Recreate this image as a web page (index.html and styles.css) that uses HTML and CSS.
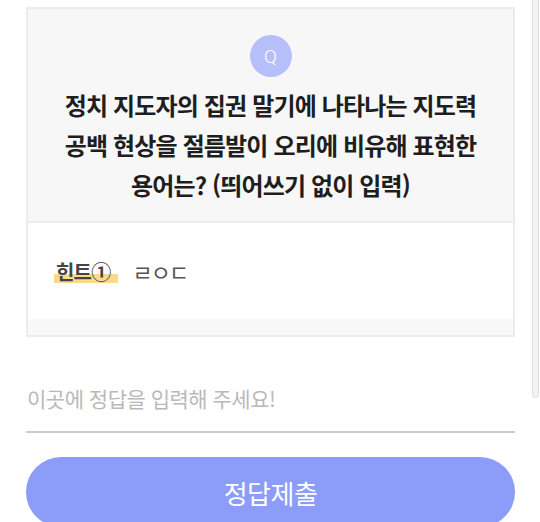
FILE: index.html
```html
<!DOCTYPE html>
<html lang="ko">
<head>
    <meta charset="UTF-8">
    <meta name="viewport" content="width=device-width, initial-scale=1.0">
    <title>퀴즈</title>
    <link rel="stylesheet" href="styles.css">
</head>
<body>
    <div class="pagina">
        <div class="tarjeta">
            <div class="pregunta">
                <div class="icono-q">Q</div>
                <h2 class="titulo">정치 지도자의 집권 말기에 나타나는 지도력<br>공백 현상을 절름발이 오리에 비유해 표현한<br>용어는? (띄어쓰기 없이 입력)</h2>
            </div>
            <div class="pista">
                <span class="pista-label">힌트①</span>
                <span class="pista-texto">ㄹㅇㄷ</span>
            </div>
            <div class="tarjeta-pie"></div>
        </div>

        <input type="text" class="respuesta" placeholder="이곳에 정답을 입력해 주세요!">
        <button class="enviar">정답제출</button>
    </div>
    <div class="barra"></div>
</body>
</html>
```

FILE: styles.css
```css
html, body {
    margin: 0;
    height: 100%;
    overflow: hidden;
}
body {
    background-color: #ffffff;
    font-family: 'Noto Sans CJK KR', 'Noto Sans', sans-serif;
    color: #222;
    position: relative;
}
.pagina {
    padding: 7px 25px 0 26px;
    display: flex;
    flex-direction: column;
}
.tarjeta {
    border: 2px solid #ececec;
    background-color: #ffffff;
}
.pregunta {
    background-color: #f7f7f7;
    border-bottom: 2px solid #ececec;
    padding: 26px 0 16px;
    display: flex;
    flex-direction: column;
    align-items: center;
}
.icono-q {
    width: 42px;
    height: 42px;
    border-radius: 50%;
    background-color: #b7bffb;
    color: #fff;
    font-family: 'Roboto', sans-serif;
    font-weight: 300;
    font-size: 19px;
    display: flex;
    justify-content: center;
    align-items: center;
}
.titulo {
    margin: 8px 0 0;
    font-size: 24px;
    line-height: 40px;
    font-weight: 700;
    letter-spacing: -0.85px;
    text-align: center;
    color: #1e1e1e;
}
.pista {
    height: 96px;
    display: flex;
    align-items: center;
    padding-left: 26px;
    gap: 14px;
}
.pista-label {
    font-size: 20px;
    font-weight: 700;
    color: #444;
    letter-spacing: -0.8px;
    padding: 0 8px 0 2px;
    background: linear-gradient(transparent 58%, #fbd98a 58%, #fbd98a 90%, transparent 90%);
}
.pista-texto {
    font-size: 22px;
    line-height: 30px;
    color: #555;
    letter-spacing: -2px;
}
.tarjeta-pie {
    height: 16px;
    background-color: #f8f8f8;
}
.respuesta {
    margin-top: 28px;
    height: 66px;
    border: none;
    border-bottom: 2px solid #cccccc;
    padding: 0 1px;
    font-family: inherit;
    font-size: 21px;
    letter-spacing: -0.5px;
    outline: none;
    background: transparent;
}
.respuesta::placeholder {
    color: #b9b9b9;
}
.enviar {
    margin-top: 24px;
    height: 70px;
    border: none;
    border-radius: 35px;
    background-color: #8b9cf9;
    color: #fff;
    font-family: inherit;
    font-size: 26px;
    letter-spacing: -0.5px;
}
.barra {
    position: absolute;
    top: -6px;
    right: 1px;
    width: 5px;
    height: 402px;
    border: 1px solid #dedede;
    border-radius: 4px;
    background-color: #f3f3f3;
}
```
